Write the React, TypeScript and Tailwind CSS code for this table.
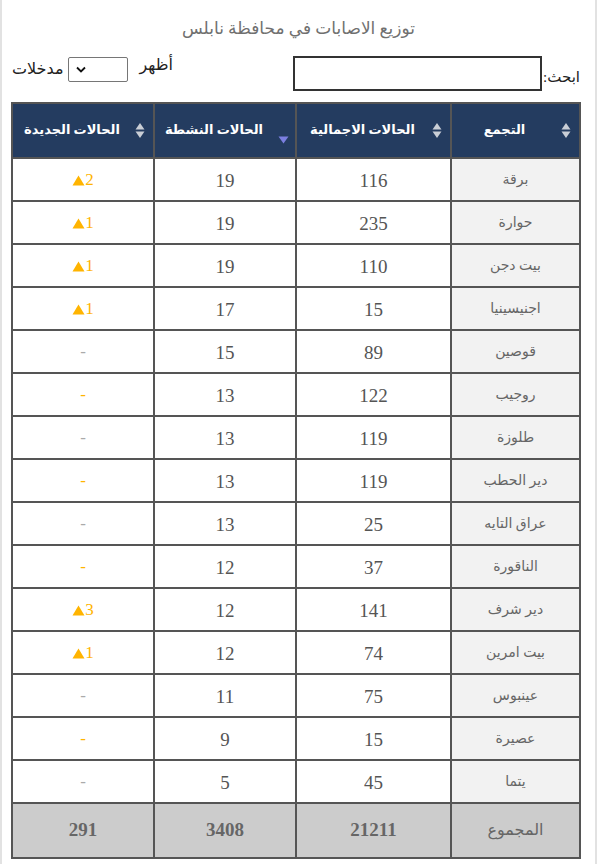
import { useState } from 'react';

type Row = {
  name: string;
  total: number;
  active: number;
  newCases: number;
  dashOrange?: boolean;
};

const rows: Row[] = [
  { name: 'برقة', total: 116, active: 19, newCases: 2 },
  { name: 'حوارة', total: 235, active: 19, newCases: 1 },
  { name: 'بيت دجن', total: 110, active: 19, newCases: 1 },
  { name: 'اجنيسينيا', total: 15, active: 17, newCases: 1 },
  { name: 'قوصين', total: 89, active: 15, newCases: 0 },
  { name: 'روجيب', total: 122, active: 13, newCases: 0, dashOrange: true },
  { name: 'طلوزة', total: 119, active: 13, newCases: 0 },
  { name: 'دير الحطب', total: 119, active: 13, newCases: 0, dashOrange: true },
  { name: 'عراق التايه', total: 25, active: 13, newCases: 0 },
  { name: 'الناقورة', total: 37, active: 12, newCases: 0, dashOrange: true },
  { name: 'دير شرف', total: 141, active: 12, newCases: 3 },
  { name: 'بيت امرين', total: 74, active: 12, newCases: 1 },
  { name: 'عينبوس', total: 75, active: 11, newCases: 0 },
  { name: 'عصيرة', total: 15, active: 9, newCases: 0, dashOrange: true },
  { name: 'يتما', total: 45, active: 5, newCases: 0 },
];

const SortBoth = () => (
  <svg width="10" height="17" viewBox="0 0 10 17" className="shrink-0">
    <path d="M5 1 L9.5 7.5 L0.5 7.5 Z" fill="#c9ced6" />
    <path d="M5 16 L9.5 9.5 L0.5 9.5 Z" fill="#c9ced6" />
  </svg>
);

const SortDesc = () => (
  <svg width="11" height="8" viewBox="0 0 11 8">
    <path d="M0.5 0.5 L10.5 0.5 L5.5 7.5 Z" fill="#7b7fe0" />
  </svg>
);

const UpMark = () => (
  <svg width="13" height="11" viewBox="0 0 13 11" className="inline-block align-[-1px]">
    <path d="M6.5 0.5 L12.5 10.5 L0.5 10.5 Z" fill="#ffb400" />
  </svg>
);

const HeaderCell = ({ label, active }: { label: string; active?: boolean }) => (
  <th className="h-[55px] border-2 border-[#555] bg-[#243c60] p-0 align-top">
    <div className="relative h-full">
      <div className="pt-[16px] pr-[22px] text-center text-[13px] font-bold text-white">{label}</div>
      {active ? (
        <span className="absolute right-[6px] bottom-[13px]">
          <SortDesc />
        </span>
      ) : (
        <span className="absolute top-[18px] right-[8px]">
          <SortBoth />
        </span>
      )}
    </div>
  </th>
);

const App = () => {
  const [query, setQuery] = useState('');
  const list = rows.filter((r) => r.name.includes(query));

  return (
    <div
      dir="rtl"
      className="h-[864px] w-[597px] border-x-2 border-[#e2e2e2] bg-white"
      style={{ fontFamily: '"Liberation Serif", "DejaVu Sans", serif' }}
    >
      <div className="pt-[16px] text-center text-[17px] text-[#707070]">توزيع الاصابات في محافظة نابلس</div>

      <div className="mt-[14px] mr-[15px] ml-[10px] flex items-start justify-between">
        <div className="flex items-center text-[15px] text-[#222]">
          <span className="mt-[8px] ml-[1px]">ابحث:</span>
          <input
            value={query}
            onChange={(e) => setQuery(e.target.value)}
            className="h-[35px] w-[249px] border-2 border-[#333] bg-white px-1 outline-none"
          />
        </div>
        <div className="mt-[1px] flex items-center gap-[5px] text-[16px] text-[#222]">
          <span className="-mt-[8px] ml-[6px]">أظهر</span>
          <div className="flex h-[25px] w-[60px] items-center justify-end rounded-[2px] border border-[#767676] bg-white pl-[7px]">
            <svg width="10" height="7" viewBox="0 0 10 7">
              <path d="M1 1.5 L5 5.5 L9 1.5" stroke="#111" strokeWidth="1.8" fill="none" />
            </svg>
          </div>
          <span>مدخلات</span>
        </div>
      </div>

      <table className="mt-[11px] mr-[14px] ml-[12px] w-[568px] table-fixed border-collapse border-2 border-[#555]">
        <colgroup>
          <col className="w-[129px]" />
          <col className="w-[155px]" />
          <col className="w-[142px]" />
          <col className="w-[142px]" />
        </colgroup>
        <thead>
          <tr>
            <HeaderCell label="التجمع" />
            <HeaderCell label="الحالات الاجمالية" />
            <HeaderCell label="الحالات النشطة" active />
            <HeaderCell label="الحالات الجديدة" />
          </tr>
        </thead>
        <tbody>
          {list.map((r) => (
            <tr key={r.name} className="h-[43px]">
              <td className="border-2 border-[#555] bg-[#f2f2f2] text-center text-[14px] text-[#666]">{r.name}</td>
              <td className="border-2 border-[#555] pt-[4px] text-center text-[19px] text-[#555]">{r.total}</td>
              <td className="border-2 border-[#555] pt-[4px] text-center text-[19px] text-[#555]">{r.active}</td>
              <td className="border-2 border-[#555] pt-[2px] text-center text-[17px]">
                {r.newCases > 0 ? (
                  <span dir="ltr" className="text-[#ffb400]">
                    <UpMark />
                    {r.newCases}
                  </span>
                ) : (
                  <span className={r.dashOrange ? 'text-[#ffb400]' : 'text-[#aaa]'}>-</span>
                )}
              </td>
            </tr>
          ))}
        </tbody>
        <tfoot>
          <tr className="h-[55px] bg-[#cccccc]">
            <td className="border-2 border-[#555] text-center text-[16px] text-[#666]">المجموع</td>
            <td className="border-2 border-[#555] text-center text-[19px] font-bold text-[#666]">21211</td>
            <td className="border-2 border-[#555] text-center text-[19px] font-bold text-[#666]">3408</td>
            <td className="border-2 border-[#555] text-center text-[19px] font-bold text-[#666]">291</td>
          </tr>
        </tfoot>
      </table>
    </div>
  );
};

export default App;
